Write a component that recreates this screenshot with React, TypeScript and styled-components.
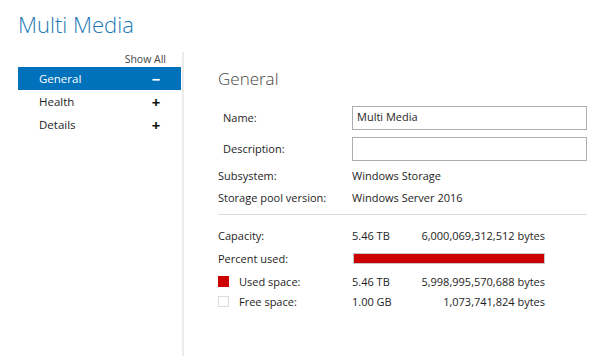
import React from "react";
import styled, { createGlobalStyle } from "styled-components";

const Global = createGlobalStyle`
  html, body { margin: 0; padding: 0; background: #fff; }
  body { font-family: "Open Sans", "Noto Sans", sans-serif; color: #1e1e1e; }
  * { box-sizing: border-box; }
`;

const Page = styled.div`
  width: 599px;
  height: 356px;
  overflow: hidden;
  background: #fff;
`;

const Title = styled.h1`
  margin: 0;
  padding: 9px 0 0 18px;
  height: 52px;
  font-family: "Open Sans", sans-serif;
  font-weight: 300;
  font-size: 22px;
  line-height: 30px;
  color: #1c79b6;
`;

const Body = styled.div`
  display: flex;
  height: 304px;
`;

const Nav = styled.nav`
  width: 166px;
  margin-left: 18px;
  border-right: 2px solid #ececec;
  display: flex;
  flex-direction: column;
`;

const ShowAll = styled.div`
  text-align: right;
  padding-right: 16px;
  height: 15px;
  font-size: 10.5px;
  line-height: 15px;
  color: #444;
`;

const NavItem = styled.div<{ $active?: boolean }>`
  display: flex;
  align-items: center;
  justify-content: space-between;
  height: 23px;
  padding: 0 20px 0 21px;
  margin-right: 1px;
  font-size: 11.5px;
  background: ${(p) => (p.$active ? "#0072bc" : "transparent")};
  color: ${(p) => (p.$active ? "#fff" : "#1e1e1e")};
`;

const Sign = styled.span<{ $active?: boolean }>`
  font-size: 15px;
  font-weight: 700;
  width: 10px;
  text-align: center;
  color: ${(p) => (p.$active ? "#fff" : "#111")};
`;

const Content = styled.section`
  flex: 1;
  padding: 15px 12px 0 34px;
  font-size: 11px;
`;

const Heading = styled.h2`
  margin: 0 0 11px 0;
  font-weight: 300;
  font-size: 17px;
  line-height: 24px;
  color: #444;
`;

const Row = styled.div<{ $h?: number; $indent?: boolean }>`
  display: grid;
  grid-template-columns: 134px 1fr;
  align-items: center;
  height: ${(p) => p.$h ?? 22}px;
  padding-left: ${(p) => (p.$indent ? 5 : 0)}px;
`;

const Label = styled.span`
  color: #1e1e1e;
  white-space: nowrap;
`;

const Input = styled.div`
  height: 24px;
  width: 235px;
  margin-left: -5px;
  border: 1px solid #abadb3;
  padding: 1px 4px;
  font-size: 11px;
  line-height: 17px;
  color: #1e1e1e;
`;

const Value = styled.span`
  color: #1e1e1e;
`;

const Divider = styled.hr`
  border: none;
  border-top: 1px solid #dcdcdc;
  margin: 6px 0 9px 0;
`;

const StatRow = styled.div<{ $h?: number }>`
  display: grid;
  grid-template-columns: 134px 64px 129px;
  align-items: center;
  height: ${(p) => p.$h ?? 22}px;
`;

const Bytes = styled.span`
  text-align: right;
  white-space: nowrap;
`;

const Bar = styled.div`
  grid-column: 2 / 4;
  height: 11px;
  margin-left: 1px;
  background: #cc0000;
  border: 1px solid #c8c8c8;
`;

const LegendLabel = styled.span`
  display: flex;
  align-items: center;
  gap: 10px;
`;

const Swatch = styled.span<{ $color: string }>`
  width: 11px;
  height: 11px;
  background: ${(p) => p.$color};
  border: 1px solid ${(p) => (p.$color === "#fff" ? "#dcdcdc" : p.$color)};
`;

export default function App() {
  return (
    <Page>
      <Global />
      <Title>Multi Media</Title>
      <Body>
        <Nav>
          <ShowAll>Show All</ShowAll>
          <NavItem $active>
            General <Sign $active>−</Sign>
          </NavItem>
          <NavItem>
            Health <Sign>+</Sign>
          </NavItem>
          <NavItem>
            Details <Sign>+</Sign>
          </NavItem>
        </Nav>
        <Content>
          <Heading>General</Heading>
          <Row $h={31} $indent>
            <Label>Name:</Label>
            <Input>Multi Media</Input>
          </Row>
          <Row $h={31} $indent>
            <Label>Description:</Label>
            <Input />
          </Row>
          <Row>
            <Label>Subsystem:</Label>
            <Value>Windows Storage</Value>
          </Row>
          <Row>
            <Label>Storage pool version:</Label>
            <Value>Windows Server 2016</Value>
          </Row>
          <Divider />
          <StatRow>
            <Label>Capacity:</Label>
            <Value>5.46 TB</Value>
            <Bytes>6,000,069,312,512 bytes</Bytes>
          </StatRow>
          <StatRow $h={24}>
            <Label>Percent used:</Label>
            <Bar />
          </StatRow>
          <StatRow>
            <LegendLabel>
              <Swatch $color="#cc0000" />
              Used space:
            </LegendLabel>
            <Value>5.46 TB</Value>
            <Bytes>5,998,995,570,688 bytes</Bytes>
          </StatRow>
          <StatRow $h={18}>
            <LegendLabel>
              <Swatch $color="#fff" />
              Free space:
            </LegendLabel>
            <Value>1.00 GB</Value>
            <Bytes>1,073,741,824 bytes</Bytes>
          </StatRow>
        </Content>
      </Body>
    </Page>
  );
}
